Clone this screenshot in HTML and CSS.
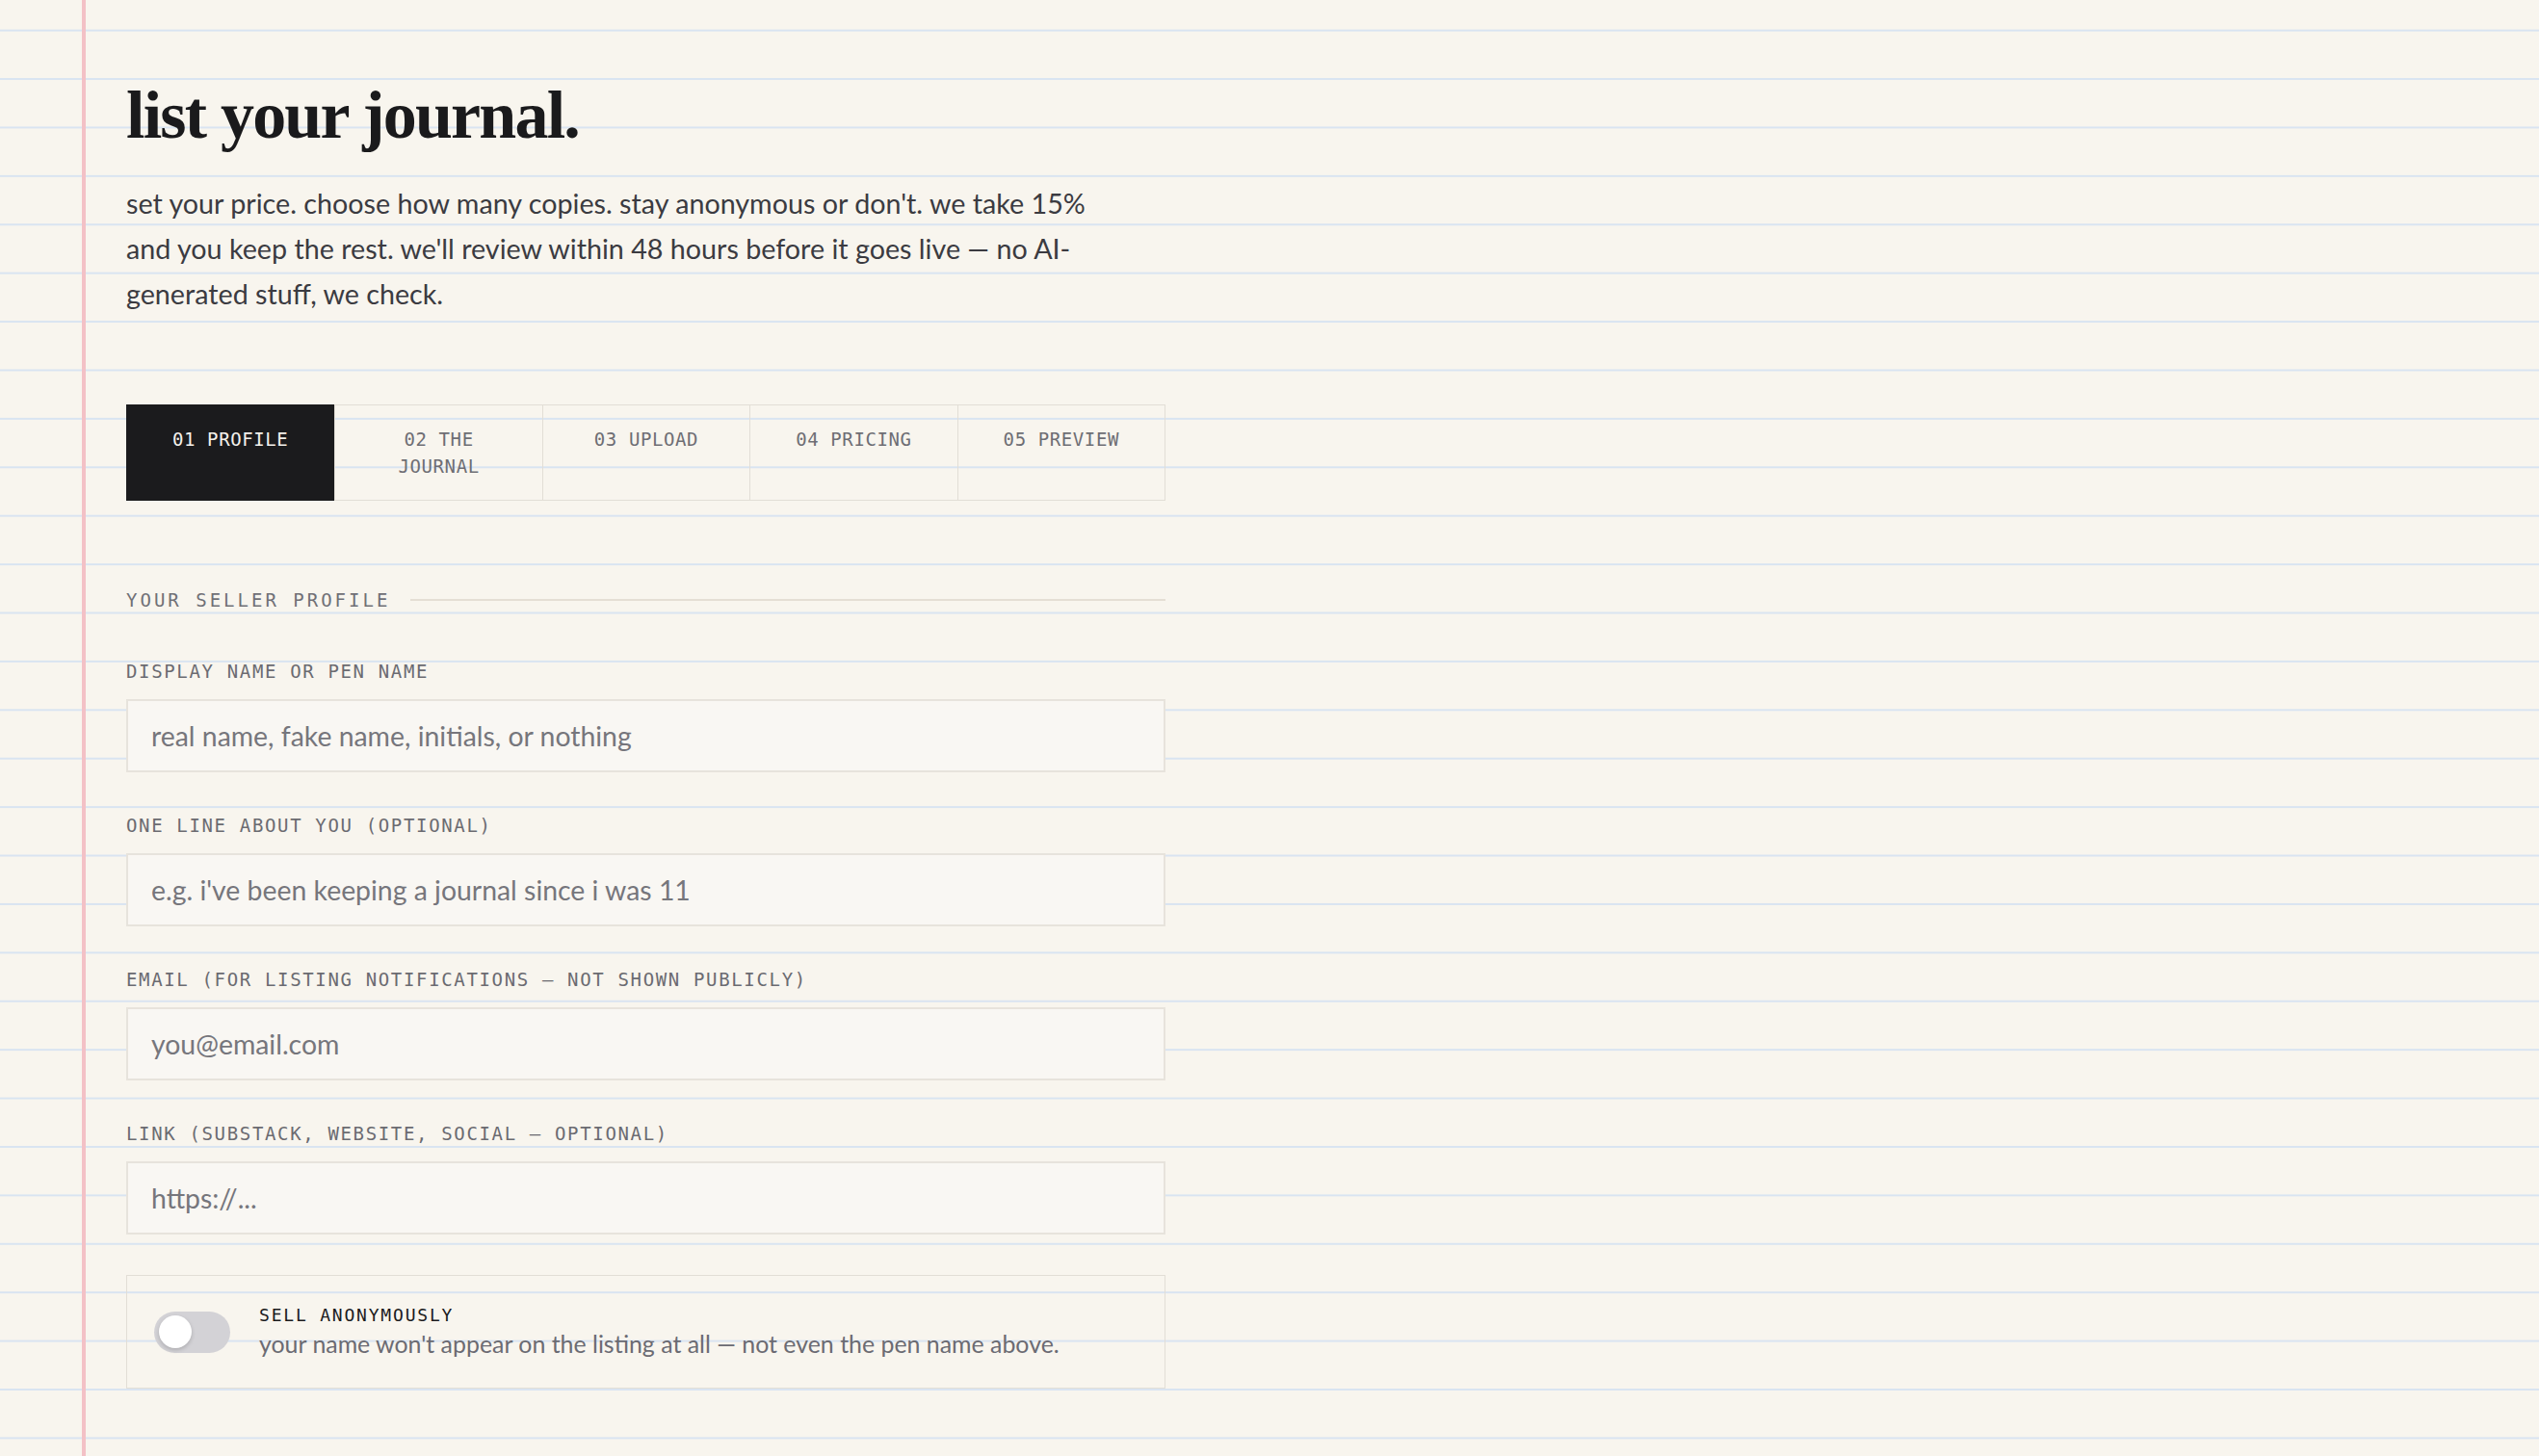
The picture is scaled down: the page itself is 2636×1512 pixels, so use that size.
FILE: index.html
```html
<!DOCTYPE html>
<html lang="en">
<head>
<meta charset="utf-8">
<title>list your journal</title>
<link rel="stylesheet" href="styles.css">
</head>
<body>
<main class="page">
  <h1 class="title">list your journal.</h1>
  <p class="intro">set your price. choose how many copies. stay anonymous or don't. we take 15% and you keep the rest. we'll review within 48 hours before it goes live — no AI-generated stuff, we check.</p>

  <nav class="steps">
    <div class="step step--active">01 profile</div>
    <div class="step">02 the journal</div>
    <div class="step">03 upload</div>
    <div class="step">04 pricing</div>
    <div class="step">05 preview</div>
  </nav>

  <section class="profile">
    <div class="section-head">
      <span class="section-name">your seller profile</span>
      <span class="section-rule"></span>
    </div>

    <div class="field">
      <label class="field-label" for="name">display name or pen name</label>
      <input class="field-input" id="name" type="text" placeholder="real name, fake name, initials, or nothing">
    </div>

    <div class="field">
      <label class="field-label" for="about">one line about you (optional)</label>
      <input class="field-input" id="about" type="text" placeholder="e.g. i've been keeping a journal since i was 11">
    </div>

    <div class="field">
      <label class="field-label" for="email">email (for listing notifications — not shown publicly)</label>
      <input class="field-input" id="email" type="email" placeholder="you@email.com">
    </div>

    <div class="field">
      <label class="field-label" for="link">link (substack, website, social — optional)</label>
      <input class="field-input" id="link" type="text" placeholder="https://...">
    </div>

    <div class="anon">
      <span class="toggle"><span class="toggle-knob"></span></span>
      <div class="anon-text">
        <div class="anon-title">sell anonymously</div>
        <div class="anon-desc">your name won't appear on the listing at all — not even the pen name above.</div>
      </div>
    </div>
  </section>
</main>
</body>
</html>
```

FILE: styles.css
```css
/* notebook paper: pink margin rule over pale blue lines */
html {
  background-color: #f8f5ee;
  background-image:
    linear-gradient(90deg, transparent 85px, #f3c1c6 85px, #f3c1c6 89px, transparent 89px),
    linear-gradient(180deg, transparent 31px, #d9e4f1 31px, #d9e4f1 33px, transparent 33px);
  background-size: 100% 100%, 100% 50.42px;
  background-repeat: no-repeat, repeat;
  min-height: 100%;
}

body {
  margin: 0;
  font-family: "Lato", "Noto Sans", sans-serif;
  color: #1b1b1d;
}

.page {
  width: 1079px;
  padding: 81px 0 60px 131px;
}

.title {
  margin: 0;
  font-family: "Liberation Serif", "DejaVu Serif", serif;
  font-weight: 700;
  font-size: 70px;
  line-height: 77px;
  letter-spacing: -1.8px;
  color: #1a1a1c;
}

.intro {
  margin: 30px 0 0;
  max-width: 1020px;
  font-size: 28.7px;
  line-height: 47px;
  color: #3b3b41;
}

/* step tabs */
.steps {
  display: grid;
  grid-template-columns: repeat(5, 1fr);
  margin-top: 90.5px;
  border: 1px solid #e2ded6;
}

.step {
  min-height: 98.5px;
  box-sizing: border-box;
  padding: 21px 30px 20px;
  border-left: 1px solid #e2ded6;
  font-family: "DejaVu Sans Mono", "Liberation Mono", monospace;
  font-size: 19px;
  line-height: 28.6px;
  letter-spacing: 0.6px;
  text-transform: uppercase;
  text-align: center;
  color: #6e6e74;
}

.step:first-child {
  border-left: 0;
}

.step--active {
  background: #1b1b1d;
  color: #f3f1ec;
  margin: -1px 0 -1px -1px;
  padding-top: 22px;
}

/* seller profile form */
.profile {
  margin-top: 89px;
}

.section-head {
  display: flex;
  align-items: center;
  gap: 21px;
}

.section-name {
  font-family: "DejaVu Sans Mono", "Liberation Mono", monospace;
  font-size: 19px;
  line-height: 28px;
  letter-spacing: 3px;
  text-transform: uppercase;
  color: #707076;
}

.section-rule {
  flex: 1;
  height: 2px;
  background: #e4ded4;
}

.field {
  margin-top: 46px;
  display: flex;
  flex-direction: column;
}

.field + .field {
  margin-top: 41px;
}

.field-label {
  font-family: "DejaVu Sans Mono", "Liberation Mono", monospace;
  font-size: 19px;
  line-height: 28px;
  letter-spacing: 1.65px;
  text-transform: uppercase;
  color: #6b6b71;
}

.field-input {
  margin-top: 15px;
  height: 76px;
  box-sizing: border-box;
  padding: 0 24px;
  border: 2px solid #e7e3dc;
  border-radius: 0;
  background: #f9f7f3;
  font-family: "Lato", "Noto Sans", sans-serif;
  font-size: 28.4px;
  color: #1b1b1d;
  outline: none;
}

.field-input::placeholder {
  color: #76767c;
}

/* anonymous toggle card */
.anon {
  margin-top: 42px;
  display: flex;
  align-items: center;
  gap: 30px;
  padding: 29px 28px;
  border: 1px solid #e2ded6;
}

.toggle {
  position: relative;
  flex: none;
  width: 79px;
  height: 43px;
  border-radius: 22px;
  background: #d3d2d6;
}

.toggle-knob {
  position: absolute;
  left: 5px;
  top: 4.5px;
  width: 34px;
  height: 34px;
  border-radius: 50%;
  background: #ffffff;
  box-shadow: 0 2px 4px rgba(0, 0, 0, 0.18);
}

.anon-title {
  font-family: "DejaVu Sans Mono", "Liberation Mono", monospace;
  font-size: 18px;
  line-height: 24px;
  letter-spacing: 1.8px;
  text-transform: uppercase;
  color: #1b1b1d;
}

.anon-desc {
  font-size: 24.9px;
  line-height: 34px;
  color: #6b6b73;
}
```
